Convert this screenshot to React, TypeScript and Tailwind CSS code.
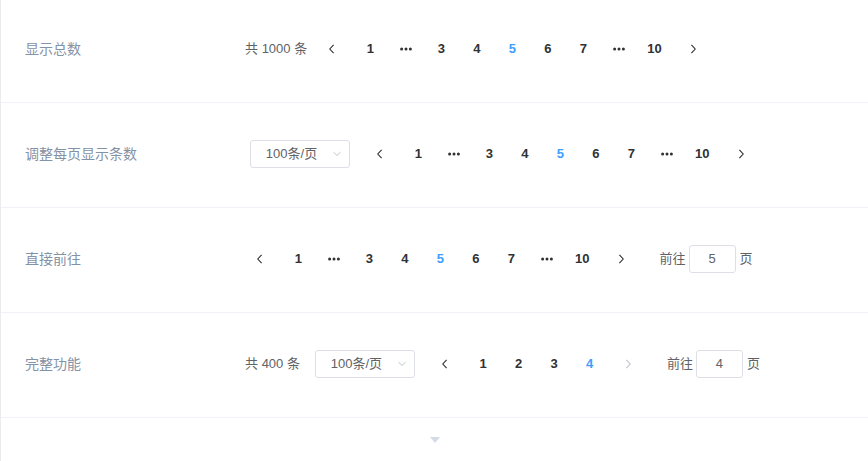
import React from 'react';

const FONT = "font-['Liberation_Sans','Noto_Sans_CJK_SC',sans-serif]";

function ArrowLeft() {
  return (
    <svg width="12" height="12" viewBox="0 0 12 12" fill="none">
      <path d="M7.6 1.8L3.8 6l3.8 4.2" stroke="currentColor" strokeWidth="1.1" />
    </svg>
  );
}

function ArrowRight() {
  return (
    <svg width="12" height="12" viewBox="0 0 12 12" fill="none">
      <path d="M4.4 1.8L8.2 6l-3.8 4.2" stroke="currentColor" strokeWidth="1.1" />
    </svg>
  );
}

function Prev({ disabled = false }: { disabled?: boolean }) {
  return (
    <button className={'flex h-7 w-[35.5px] items-center justify-center pl-[6px] pr-[12px] ' + (disabled ? 'text-[#c0c4cc]' : 'text-[#303133]')}>
      <ArrowLeft />
    </button>
  );
}

function Next({ disabled = false }: { disabled?: boolean }) {
  return (
    <button className={'flex h-7 w-[35.5px] items-center justify-center pl-[12px] pr-[6px] ' + (disabled ? 'text-[#c0c4cc]' : 'text-[#303133]')}>
      <ArrowRight />
    </button>
  );
}

function More() {
  return (
    <li className="flex h-7 w-[35.5px] items-center justify-center text-[#303133]">
      <svg width="12" height="4" viewBox="0 0 12 4" fill="currentColor">
        <circle cx="1.6" cy="2" r="1.5" />
        <circle cx="6" cy="2" r="1.5" />
        <circle cx="10.4" cy="2" r="1.5" />
      </svg>
    </li>
  );
}

function Pager({ pages, active }: { pages: (number | 'more')[]; active: number }) {
  return (
    <ul className="flex">
      {pages.map((p, i) =>
        p === 'more' ? (
          <More key={i} />
        ) : (
          <li
            key={i}
            className={'h-7 w-[35.5px] text-center text-[13px] font-bold leading-7 ' + (p === active ? 'text-[#409eff]' : 'text-[#303133]')}
          >
            {p}
          </li>
        )
      )}
    </ul>
  );
}

function Total({ n }: { n: number }) {
  return <span className="mr-[10px] h-7 text-[13px] leading-7 text-[#606266]">共 {n} 条</span>;
}

function Sizes() {
  return (
    <div className="mr-[10px]">
      <div className="relative mx-[5px] flex h-7 w-[100px] items-center justify-center rounded-[3px] border border-[#dcdfe6] pl-[8px] pr-[25px] text-[13px] text-[#606266]">
        100条/页
        <span className="absolute right-[6px] top-[9px] text-[#c0c4cc]">
          <svg width="12" height="8" viewBox="0 0 12 8" fill="none">
            <path d="M2.5 2.2L6 5.4l3.5-3.2" stroke="currentColor" strokeWidth="1" />
          </svg>
        </span>
      </div>
    </div>
  );
}

function Jumper({ value }: { value: number }) {
  return (
    <span className="ml-6 flex h-7 items-center text-[13px] text-[#606266]">
      前往
      <span className="ml-[3px] mr-[4px] flex h-7 w-[47px] items-center justify-center rounded-[3px] border border-[#dcdfe6] text-[13px] text-[#606266]">
        {value}
      </span>
      页
    </span>
  );
}

function Row({ label, children }: { label: string; children: React.ReactNode }) {
  return (
    <div className="flex h-[105px] items-center border-b border-[#eff2f6] pb-[2px] pl-6">
      <span className="w-[215px] text-[14px] text-[#8492a6]">{label}</span>
      <div className="flex items-center px-[5px] py-[2px]">{children}</div>
    </div>
  );
}

const PAGES: (number | 'more')[] = [1, 'more', 3, 4, 5, 6, 7, 'more', 10];

export default function App() {
  return (
    <div className={'h-[461px] overflow-hidden bg-white ' + FONT}>
      <div className="-mt-[2px] h-[470px] border-l border-[#ebebeb]">
        <Row label="显示总数">
          <Total n={1000} />
          <Prev />
          <Pager pages={PAGES} active={5} />
          <Next />
        </Row>
        <Row label="调整每页显示条数">
          <Sizes />
          <Prev />
          <Pager pages={PAGES} active={5} />
          <Next />
        </Row>
        <Row label="直接前往">
          <Prev />
          <Pager pages={PAGES} active={5} />
          <Next />
          <Jumper value={5} />
        </Row>
        <Row label="完整功能">
          <Total n={400} />
          <Sizes />
          <Prev />
          <Pager pages={[1, 2, 3, 4]} active={4} />
          <Next disabled />
          <Jumper value={4} />
        </Row>
        <div className="flex h-11 items-center justify-center">
          <svg width="10" height="6" viewBox="0 0 10 6" fill="#d3dce6">
            <path d="M0 0h10L5 6z" />
          </svg>
        </div>
      </div>
    </div>
  );
}
